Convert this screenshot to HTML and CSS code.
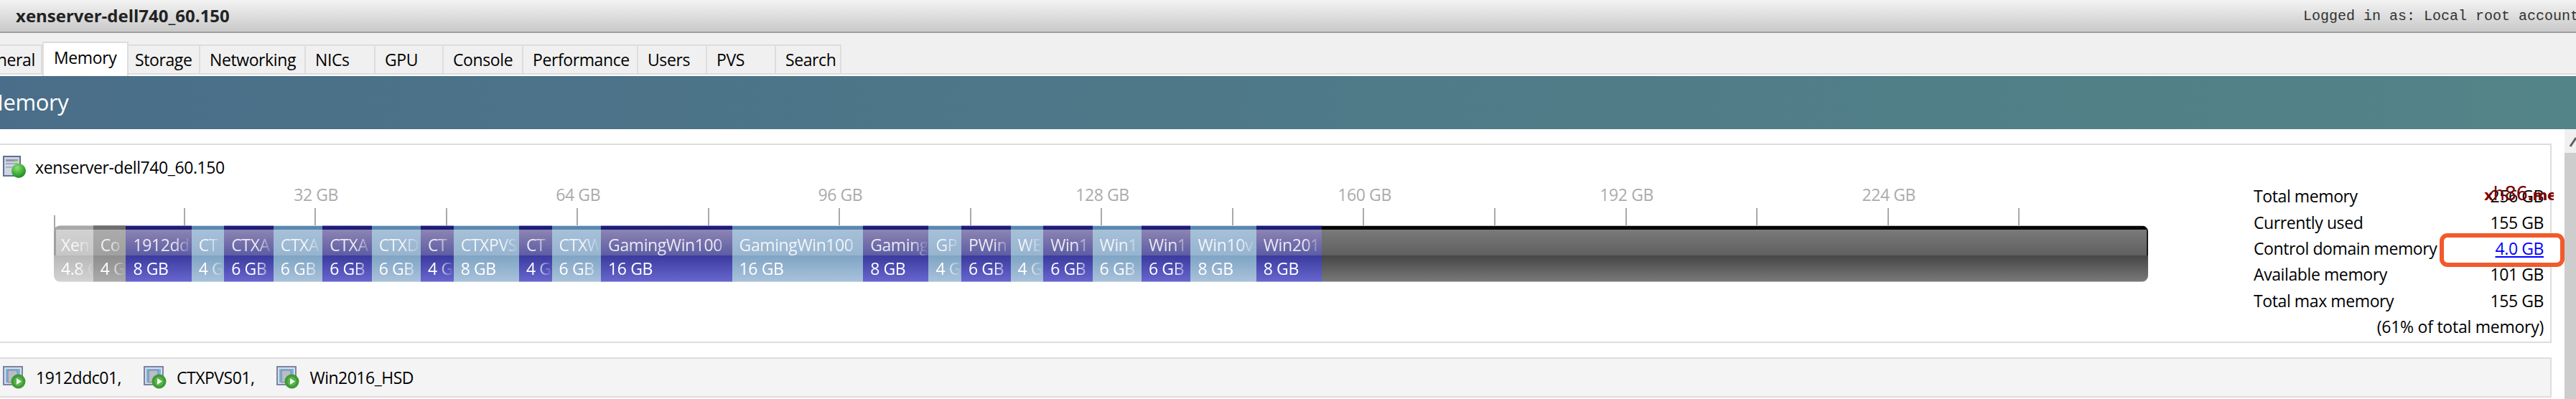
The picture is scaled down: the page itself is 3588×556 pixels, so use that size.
FILE: index.html
```html
<!DOCTYPE html>
<html lang="en">
<head>
<meta charset="utf-8">
<title>xenserver-dell740_60.150 - Memory</title>
<link rel="stylesheet" href="styles.css">
</head>
<body>
<svg class="defs" width="0" height="0" aria-hidden="true">
  <defs>
    <radialGradient id="ball" cx="40%" cy="30%" r="75%">
      <stop offset="0" stop-color="#8fe07a"/>
      <stop offset="0.55" stop-color="#45b13a"/>
      <stop offset="1" stop-color="#1f7f22"/>
    </radialGradient>
    <symbol id="server" viewBox="0 0 32 32">
      <rect x="1" y="1" width="23" height="27" fill="#cfd5e2" stroke="#646f8e" stroke-width="2"/>
      <rect x="4" y="5" width="17" height="3" fill="#8d97ae"/>
      <rect x="4" y="10" width="17" height="2" fill="#a3acc0"/>
      <rect x="16" y="7" width="5" height="2" fill="#9fe84f"/>
      <rect x="4" y="15" width="12" height="2" fill="#aab2c4"/>
      <circle cx="22" cy="21" r="10" fill="url(#ball)"/>
    </symbol>
    <symbol id="vm" viewBox="0 0 32 32">
      <rect x="1" y="1" width="26" height="25" fill="#d8dce6" stroke="#7c84a2" stroke-width="2"/>
      <rect x="4" y="4" width="20" height="19" fill="#77b4e4"/>
      <rect x="7" y="6" width="13" height="17" fill="#b9bdc8" stroke="#7f8496"/>
      <circle cx="21.500" cy="21.500" r="10" fill="#3f9a34"/>
      <circle cx="21.500" cy="21.500" r="6.500" fill="#59b24c"/>
      <path d="M19 17l7 4.500-7 4.500z" fill="#f1fbec"/>
    </symbol>
  </defs>
</svg>

<header class="titlebar">
  <h1 class="host-title">xenserver-dell740_60.150</h1>
  <span class="login">Logged in as: Local root account</span>
</header>

<nav class="tabs">
  <span class="tab tab-clipped">General</span>
  <span class="tab tab-active">Memory</span>
  <span class="tab tab-storage">Storage</span>
  <span class="tab">Networking</span>
  <span class="tab">NICs</span>
  <span class="tab">GPU</span>
  <span class="tab">Console</span>
  <span class="tab">Performance</span>
  <span class="tab">Users</span>
  <span class="tab">PVS</span>
  <span class="tab">Search</span>
</nav>
<div class="tabs-gap"></div>

<div class="banner"><h2 class="banner-title">Memory</h2></div>

<div class="workspace">
  <main class="content">
    <section class="host-panel">
      <div class="chart-col">
        <div class="entity">
          <svg class="icon"><use href="#server"/></svg>
          <span>xenserver-dell740_60.150</span>
        </div>
        <div class="axis-labels">
          <span class="axis-cell"><span class="axis-text">32 GB</span></span>
          <span class="axis-cell"><span class="axis-text">64 GB</span></span>
          <span class="axis-cell"><span class="axis-text">96 GB</span></span>
          <span class="axis-cell"><span class="axis-text">128 GB</span></span>
          <span class="axis-cell"><span class="axis-text">160 GB</span></span>
          <span class="axis-cell"><span class="axis-text">192 GB</span></span>
          <span class="axis-cell"><span class="axis-text">224 GB</span></span>
        </div>
        <div class="ticks">
          <i></i><i></i><i></i><i></i><i></i><i></i><i></i><i></i><i></i><i></i><i></i><i></i><i></i><i></i><i></i>
        </div>
        <div class="bar">
          <div class="seg seg-xen" style="--gb:4.8"><b>Xen</b><b>4.8 G</b></div>
          <div class="seg seg-ctl" style="--gb:4"><b>Co</b><b>4 GB</b></div>
          <div class="seg seg-a" style="--gb:8"><b>1912dd</b><b>8 GB</b></div>
          <div class="seg seg-b" style="--gb:4"><b>CT</b><b>4 GB</b></div>
          <div class="seg seg-a" style="--gb:6"><b>CTXA</b><b>6 GB</b></div>
          <div class="seg seg-b" style="--gb:6"><b>CTXA</b><b>6 GB</b></div>
          <div class="seg seg-a" style="--gb:6"><b>CTXA</b><b>6 GB</b></div>
          <div class="seg seg-b" style="--gb:6"><b>CTXD</b><b>6 GB</b></div>
          <div class="seg seg-a" style="--gb:4"><b>CT</b><b>4 GB</b></div>
          <div class="seg seg-b" style="--gb:8"><b>CTXPVS</b><b>8 GB</b></div>
          <div class="seg seg-a" style="--gb:4"><b>CT</b><b>4 GB</b></div>
          <div class="seg seg-b" style="--gb:6"><b>CTXW</b><b>6 GB</b></div>
          <div class="seg seg-a" style="--gb:16"><b>GamingWin100</b><b>16 GB</b></div>
          <div class="seg seg-b" style="--gb:16"><b>GamingWin100</b><b>16 GB</b></div>
          <div class="seg seg-a" style="--gb:8"><b>Gaming</b><b>8 GB</b></div>
          <div class="seg seg-b" style="--gb:4"><b>GP</b><b>4 GB</b></div>
          <div class="seg seg-a" style="--gb:6"><b>PWin</b><b>6 GB</b></div>
          <div class="seg seg-b" style="--gb:4"><b>WE</b><b>4 GB</b></div>
          <div class="seg seg-a" style="--gb:6"><b>Win1</b><b>6 GB</b></div>
          <div class="seg seg-b" style="--gb:6"><b>Win1</b><b>6 GB</b></div>
          <div class="seg seg-a" style="--gb:6"><b>Win1</b><b>6 GB</b></div>
          <div class="seg seg-b" style="--gb:8"><b>Win10v</b><b>8 GB</b></div>
          <div class="seg seg-a" style="--gb:8"><b>Win201</b><b>8 GB</b></div>
          <div class="seg seg-free"></div>
        </div>
      </div>
      <dl class="stats">
        <dt>Total memory</dt><dd>256 GB</dd>
        <dt>Currently used</dt><dd>155 GB</dd>
        <dt>Control domain memory</dt><dd class="dom0"><a href="#">4.0 GB</a></dd>
        <dt>Available memory</dt><dd>101 GB</dd>
        <dt>Total max memory</dt><dd>155 GB</dd>
        <dd class="note">(61% of total memory)</dd>
        <span class="watermark">x<span class="watermark-big">h86</span>.me</span>
      </dl>
    </section>

    <section class="vm-panel">
      <span class="vm"><svg class="icon"><use href="#vm"/></svg><span>1912ddc01,</span></span>
      <span class="vm"><svg class="icon"><use href="#vm"/></svg><span>CTXPVS01,</span></span>
      <span class="vm"><svg class="icon"><use href="#vm"/></svg><span>Win2016_HSD</span></span>
    </section>
  </main>
  <aside class="scrollbar">
    <div class="scroll-btn">
      <svg width="16" height="33" viewBox="0 0 16 33"><path d="M8 24L16 12" stroke="#606060" stroke-width="3" fill="none"/></svg>
    </div>
  </aside>
</div>
</body>
</html>
```

FILE: styles.css
```css
*, *::before, *::after { box-sizing: border-box; }
html, body { margin: 0; padding: 0; }
body {
  width: 3588px;
  height: 556px;
  overflow: hidden;
  background: #fff;
  color: #000;
  font-family: "Open Sans", "Noto Sans", sans-serif;
  font-size: 23px;
  letter-spacing: -0.4px;
}
.defs { position: absolute; }

/* title bar */
.titlebar {
  height: 46px;
  display: flex;
  align-items: center;
  justify-content: space-between;
  padding-left: 22px;
  background: linear-gradient(#f3f3f3, #c9c9c9);
  border-bottom: 2px solid #a0a0a0;
  overflow: hidden;
}
.host-title { margin: 0; font-size: 24px; font-weight: 700; letter-spacing: 0; color: #222; line-height: 44px; }
.login {
  flex: none;
  width: 380px;
  overflow: hidden;
  white-space: nowrap;
  font-family: "Liberation Mono", monospace;
  font-size: 20px;
  letter-spacing: 0;
  color: #333;
}

/* tabs */
.tabs {
  height: 58px;
  margin-left: -46px;
  display: grid;
  grid-template-columns: 105px 120px 100px 147px 97px 95px 111px 160px 96px 96px 91px;
  align-items: end;
  background: #f0f0f0;
  border-bottom: 2px solid #ddd;
  width: 3634px;
}
.tab {
  height: 40px;
  padding-left: 13px;
  border: 2px solid #ddd;
  border-width: 2px 2px 0 0;
  line-height: 38px;
  white-space: nowrap;
  overflow: hidden;
}
.tab-active {
  height: 48px;
  margin-bottom: -4px;
  padding-left: 14px;
  position: relative;
  background: #fff;
  border-width: 2px 2px 0 2px;
  line-height: 40px;
}
.tab-storage { padding-left: 9px; }
.tabs-gap { height: 2px; background: #fff; }

/* banner */
.banner {
  height: 74px;
  display: flex;
  align-items: center;
  overflow: hidden;
  background: linear-gradient(to right, #4a6e89, #538487);
}
.banner-title {
  margin: -2px 0 0 -23px;
  color: #fff;
  font-size: 31px;
  font-weight: 400;
}

/* main area */
.workspace { display: flex; height: 376px; }
.content { flex: 1; padding: 20px 18px 0 0; }
.scrollbar { flex: 0 0 16px; background: #cdcdcd; }
.scroll-btn { height: 33px; background: #f0f0f0; overflow: hidden; }
.scroll-btn svg { display: block; }

.host-panel {
  height: 278px;
  display: flex;
  border: 2px solid #ddd;
  border-left: 0;
}
.chart-col { width: 3139px; flex: none; }
.entity {
  height: 52px;
  padding: 10px 0 0 4px;
  display: flex;
  align-items: center;
  gap: 13px;
}
.icon { width: 32px; height: 32px; flex: none; }

.axis-labels {
  display: flex;
  height: 36px;
  padding-left: 75px;
  color: #ababab;
}
.axis-cell { flex: 0 0 365.12px; display: flex; justify-content: flex-end; line-height: 34px; }
.axis-text { transform: translateX(50%); white-space: nowrap; }

.ticks { position: relative; display: flex; height: 24px; padding-left: 75px; }
.ticks i { flex: 0 0 182.56px; border-right: 2px solid #a9a9a9; }
.ticks::before {
  content: "";
  position: absolute;
  z-index: 1;
  left: 75px;
  top: 10px;
  width: 2px;
  height: 20px;
  background: #a9a9a9;
}

.bar {
  position: relative;
  display: flex;
  width: 2917px;
  height: 79px;
  margin-left: 75px;
  border-radius: 9px;
  overflow: hidden;
}
.seg {
  flex: none;
  width: calc(var(--gb) * 11.41px);
  height: 79px;
  padding: 6px 0 0 10px;
  color: #fff;
  overflow: hidden;
  white-space: nowrap;
}
.seg b {
  display: block;
  height: 36px;
  font-weight: 400;
  line-height: 36px;
  -webkit-mask-image: linear-gradient(to left, transparent 0, #000 24px);
  mask-image: linear-gradient(to left, transparent 0, #000 24px);
  overflow: hidden;
}
.seg b:first-child { padding-top: 3px; opacity: 0.85; }
.seg-a {
  background: linear-gradient(#9c98dc 0 1px, #1e1e78 1px 6px, #8c84b2 6px, #5d5ca4 42px, #3a3a9e 42px, #6666ce 78px, #aaaae2 78px);
}
.seg-b {
  background: linear-gradient(#cddde9 0 1px, #5a88af 1px 6px, #a6c0d8 6px, #97b4cf 42px, #7fa4c4 42px, #a8c1da 78px, #c8dae6 78px);
}
.seg-xen {
  background:
    linear-gradient(to right, #a0a0a0 3px, transparent 3px) top / 100% 42px no-repeat,
    linear-gradient(#c8c8c8 0 1px, #a8a8a8 1px 6px, #d2d2d2 6px, #c6c6c6 42px, #b8b8b8 42px, #d2d2d2 78px, #e0e0e0 78px);
}
.seg-ctl {
  background: linear-gradient(#8a8a8a 0 1px, #6e6e6e 1px 6px, #ababab 6px, #a0a0a0 42px, #8e8e8e 42px, #aaa 78px, #ccc 78px);
}
.seg-free {
  flex: 1;
  width: auto;
  padding: 0;
  background:
    linear-gradient(to left, #1a1a1a 2px, transparent 2px) top / 100% 42px no-repeat,
    linear-gradient(#c4c4c4 0 1px, #060606 1px 6px, #7a7a7a 6px, #5f5f5f 42px, #464646 42px, #787878 78px, #b8b8b8 78px);
}

/* stats */
.stats {
  position: relative;
  flex: none;
  width: 404px;
  height: 100%;
  margin: 0;
  padding-top: 53px;
  display: grid;
  grid-template-columns: 1fr auto;
  grid-auto-rows: 36.4px;
  align-items: center;
  white-space: nowrap;
}
.stats dt { margin: 0; }
.stats dd { margin: 0; text-align: right; }
.stats .note { grid-column: 1 / -1; letter-spacing: -0.25px; }
.dom0 { position: relative; }
.dom0 a { position: relative; z-index: 2; color: #0000ff; }
.dom0::before {
  content: "";
  position: absolute;
  z-index: 1;
  right: -29px;
  top: -5px;
  width: 174px;
  height: 47px;
  background: #fff;
  border: 6px solid #f15a2b;
  border-radius: 11px;
}
.watermark {
  position: absolute;
  left: 321px;
  top: 49px;
  width: 97px;
  overflow: hidden;
  font-family: "DejaVu Sans", sans-serif;
  font-size: 20px;
  font-weight: 700;
  letter-spacing: -0.5px;
  color: #7a0000;
  line-height: 38px;
}
.watermark-big { font-size: 26px; font-weight: 400; }

/* vm list */
.vm-panel {
  height: 56px;
  margin-top: 20px;
  display: flex;
  align-items: center;
  gap: 31px;
  padding-left: 4px;
  background: #f4f4f4;
  border: 2px solid #ddd;
  border-left: 0;
  letter-spacing: -0.5px;
}
.vm { display: flex; align-items: center; gap: 14px; white-space: nowrap; }
```
